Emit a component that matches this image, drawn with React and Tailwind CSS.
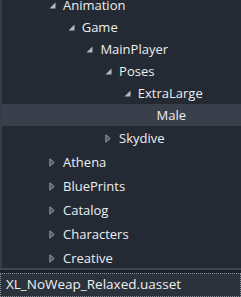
import React from 'react'

const rows = [
  { name: 'Animation', level: 0, state: 'open' },
  { name: 'Game', level: 1, state: 'open' },
  { name: 'MainPlayer', level: 2, state: 'open' },
  { name: 'Poses', level: 3, state: 'open' },
  { name: 'ExtraLarge', level: 4, state: 'open' },
  { name: 'Male', level: 5, state: 'leaf', selected: true },
  { name: 'Skydive', level: 3, state: 'closed' },
  { name: 'Athena', level: 0, state: 'closed' },
  { name: 'BluePrints', level: 0, state: 'closed' },
  { name: 'Catalog', level: 0, state: 'closed' },
  { name: 'Characters', level: 0, state: 'closed' },
  { name: 'Creative', level: 0, state: 'closed' },
]

function Arrow({ state }) {
  if (state === 'open')
    return (
      <svg width="7" height="7" viewBox="0 0 7 7" className="shrink-0">
        <path d="M6.5 0.5 L6.5 6.5 L0.5 6.5 Z" fill="#b4b8bf" />
      </svg>
    )
  if (state === 'closed')
    return (
      <svg width="6" height="9" viewBox="0 0 6 9" className="shrink-0">
        <path d="M0.8 0.8 L5.2 4.5 L0.8 8.2 Z" fill="#555c68" stroke="#8e939b" strokeWidth="1" />
      </svg>
    )
  return <span className="w-[7px] shrink-0" />
}

export default function App() {
  return (
    <div className="w-[241px] h-[297px] overflow-hidden bg-[#242a33] flex flex-col font-['Open_Sans',sans-serif] text-[#eceef1]">
      <div className="flex-1 overflow-hidden border-l-2 border-[#363d49] -mt-[6px]">
        {rows.map((r, i) => (
          <div
            key={r.name}
            className={
              'flex items-center ' +
              (i < 6 ? 'h-[22px] ' : 'h-[24px] ') +
              (r.selected ? 'bg-[#3a404b]' : '')
            }
            style={{ paddingLeft: 47 + r.level * 18.7 }}
          >
            <span className="w-[14px] flex items-center">
              <Arrow state={r.state} />
            </span>
            <span className="text-[13px] leading-none">{r.name}</span>
          </div>
        ))}
      </div>
      <div className="h-[2px] bg-[#3e4552]" />
      <div className="h-[3px] bg-[#1e232b]" />
      <div className="h-[24px] bg-[#2c323c] border border-dotted border-[#8a9099] flex items-center px-[5px]">
        <span className="text-[13.5px] leading-none text-[#eef0f2]">XL_NoWeap_Relaxed.uasset</span>
      </div>
    </div>
  )
}
